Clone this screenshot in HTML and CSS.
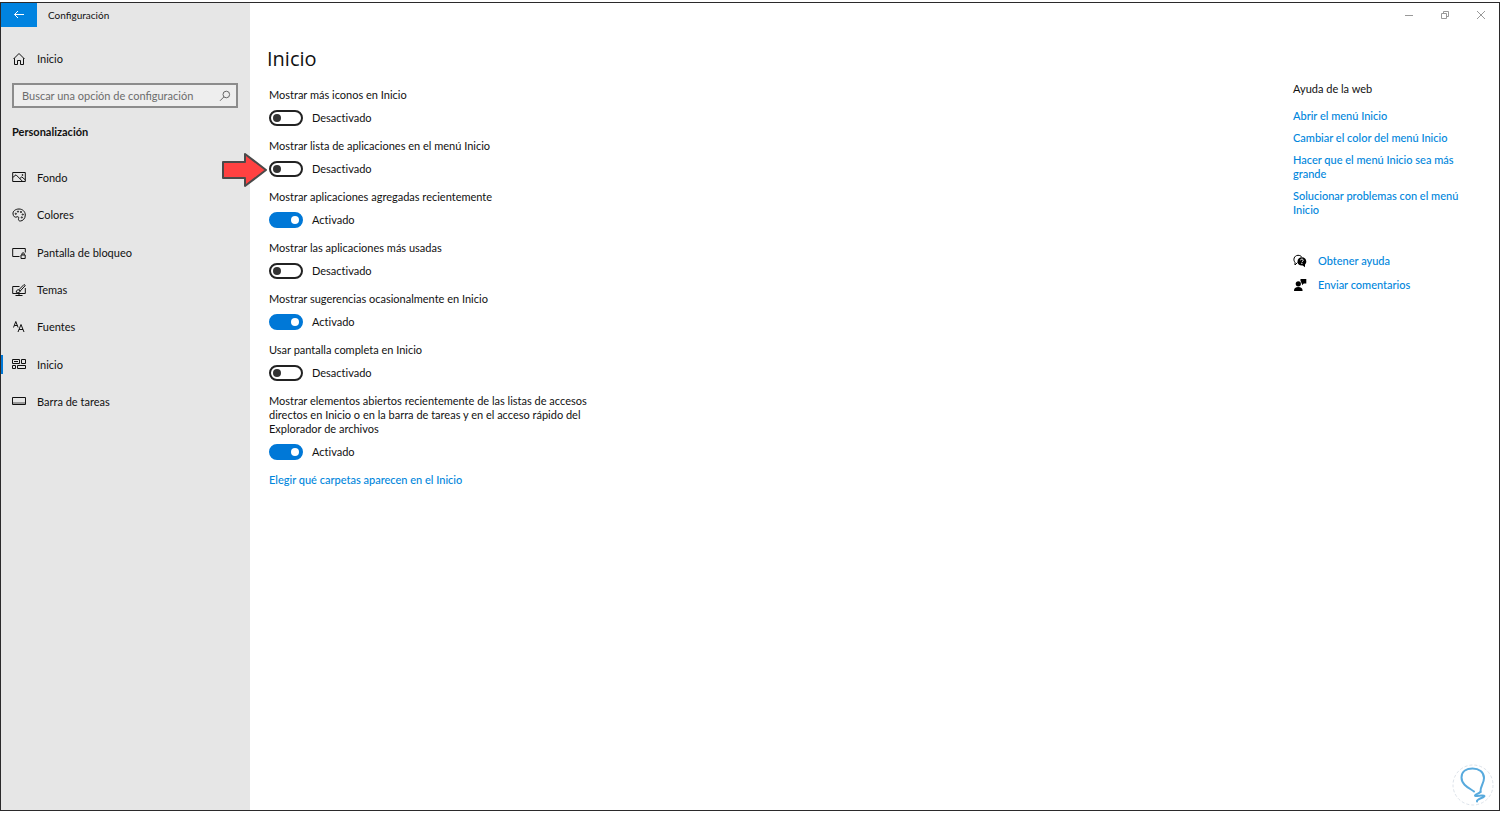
FILE: index.html
```html
<!DOCTYPE html>
<html lang="es">
<head>
<meta charset="utf-8">
<title>Configuración</title>
<link rel="stylesheet" href="styles.css">
</head>
<body>
<div class="window">
  <aside class="sidebar">
    <header class="titlebar">
      <button class="back" type="button" aria-label="Atrás">
        <svg class="back-icon" viewBox="0 0 12 12"><path d="M11 5.500H1.500M5 2L1.500 5.500 5 9"/></svg>
      </button>
      <span class="app-name">Configuración</span>
    </header>
    <a class="nav-link home" href="#">
      <svg class="icon" viewBox="0 0 14 14"><path d="M1.500 7L7 1.500 12.500 7M2.500 6.200V12.500H5.500V8.500h3v4h3V6.200"/></svg>
      <span>Inicio</span>
    </a>
    <form class="search" role="search">
      <input class="search-input" type="search" placeholder="Buscar una opción de configuración" aria-label="Buscar una opción de configuración">
      <svg class="search-icon" viewBox="0 0 12 12"><circle cx="7.300" cy="4.500" r="3.300"/><path d="M4.900 6.900L1 10.800"/></svg>
    </form>
    <h2 class="section-name">Personalización</h2>
    <nav class="nav">
      <a class="nav-link" href="#">
        <svg class="icon" viewBox="0 0 14 14"><path d="M.7 1.500h12.600v9H.7zM.7 6.500L4 3.800l6.500 6.500M7.800 7.500l2-1.600 3.500 3"/><circle cx="10.500" cy="4" r=".5"/></svg>
        <span>Fondo</span>
      </a>
      <a class="nav-link" href="#">
        <svg class="icon" viewBox="0 0 14 14"><path d="M1 6C.6 3 3.600 1 7 1c3.500 0 6.300 2.500 6.300 6 0 3.700-2.600 6-5 6-1.800 0-2.100-1.200-1.700-2.500.4-1.400-.4-2.200-1.600-1.600C3 9.800 1.300 8.500 1 6z"/><circle cx="3.800" cy="5.800" r=".6"/><circle cx="6" cy="3.600" r=".6"/><circle cx="9" cy="4" r=".6"/><circle cx="10.800" cy="6.500" r=".6"/><circle cx="9.800" cy="9.400" r=".6"/></svg>
        <span>Colores</span>
      </a>
      <a class="nav-link" href="#">
        <svg class="icon" viewBox="0 0 14 14"><path d="M7.500 10.500H.7v-8h12.600v4M9 9h4.200v3.500H9zM10 9V7.800c0-1.500 2.200-1.500 2.200 0V9"/></svg>
        <span>Pantalla de bloqueo</span>
      </a>
      <a class="nav-link" href="#">
        <svg class="icon" viewBox="0 0 14 14"><path d="M7.500 3.500H.7v7h12.600V5M3.500 12.500h7M7 10.500v2M4.200 9.200c.2-2 1.300-2.700 2.600-2.300L12 1.500l1.300 1L8.200 8c0 1.500-2.200 2.200-4 1.200zM6.800 6.900L8.200 8"/></svg>
        <span>Temas</span>
      </a>
      <a class="nav-link" href="#">
        <svg class="icon" viewBox="0 0 14 14"><path d="M1.500 7.500l2.300-6 2.300 6M2.300 5.500h3M6 12l3-7.500 3 7.500M7 9.500h4"/></svg>
        <span>Fuentes</span>
      </a>
      <a class="nav-link current" href="#" aria-current="page">
        <svg class="icon" viewBox="0 0 14 14"><path d="M.5 1.500h7v4h-7zM9.500 1.500h4v4h-4zM.5 7.500h3v3h-3zM5.500 7.500h8v3h-8zM2 3.500h4"/></svg>
        <span>Inicio</span>
      </a>
      <a class="nav-link" href="#">
        <svg class="icon" viewBox="0 0 14 14"><path class="shade" d="M1 7h12v3H1z"/><path d="M.5 2.500h13v7H.5z"/></svg>
        <span>Barra de tareas</span>
      </a>
    </nav>
  </aside>

  <div class="page">
    <div class="controls">
      <button class="control" type="button" aria-label="Minimizar"><svg class="control-icon" viewBox="0 0 10 10"><path d="M1 5.500h8"/></svg></button>
      <button class="control" type="button" aria-label="Restaurar"><svg class="control-icon" viewBox="0 0 10 10"><path d="M1.500 3.500h5v5h-5zM3.500 3.500v-2h5v5h-2"/></svg></button>
      <button class="control" type="button" aria-label="Cerrar"><svg class="control-icon" viewBox="0 0 10 10"><path d="M1 1l8 8M9 1L1 9"/></svg></button>
    </div>
    <div class="content">
      <main class="main">
        <h1 class="heading">Inicio</h1>
        <div class="settings">
          <div class="setting">
            <label class="setting-name" for="s1">Mostrar más iconos en Inicio</label>
            <div class="setting-row"><input class="toggle" type="checkbox" role="switch" id="s1"><span>Desactivado</span></div>
          </div>
          <div class="setting">
            <label class="setting-name" for="s2">Mostrar lista de aplicaciones en el menú Inicio</label>
            <div class="setting-row"><input class="toggle" type="checkbox" role="switch" id="s2"><span>Desactivado</span>
              <svg class="pointer" viewBox="0 0 48 36"><path d="M2 10h22V2l21 16-21 16v-8H2z"/></svg>
            </div>
          </div>
          <div class="setting">
            <label class="setting-name" for="s3">Mostrar aplicaciones agregadas recientemente</label>
            <div class="setting-row"><input class="toggle" type="checkbox" role="switch" id="s3" checked><span>Activado</span></div>
          </div>
          <div class="setting">
            <label class="setting-name" for="s4">Mostrar las aplicaciones más usadas</label>
            <div class="setting-row"><input class="toggle" type="checkbox" role="switch" id="s4"><span>Desactivado</span></div>
          </div>
          <div class="setting">
            <label class="setting-name" for="s5">Mostrar sugerencias ocasionalmente en Inicio</label>
            <div class="setting-row"><input class="toggle" type="checkbox" role="switch" id="s5" checked><span>Activado</span></div>
          </div>
          <div class="setting">
            <label class="setting-name" for="s6">Usar pantalla completa en Inicio</label>
            <div class="setting-row"><input class="toggle" type="checkbox" role="switch" id="s6"><span>Desactivado</span></div>
          </div>
          <div class="setting">
            <label class="setting-name" for="s7">Mostrar elementos abiertos recientemente de las listas de accesos directos en Inicio o en la barra de tareas y en el acceso rápido del Explorador de archivos</label>
            <div class="setting-row"><input class="toggle" type="checkbox" role="switch" id="s7" checked><span>Activado</span></div>
          </div>
          <a class="link" href="#">Elegir qué carpetas aparecen en el Inicio</a>
        </div>
      </main>
      <aside class="help">
        <h2 class="help-title">Ayuda de la web</h2>
        <div class="help-links">
          <a class="link" href="#">Abrir el menú Inicio</a>
          <a class="link" href="#">Cambiar el color del menú Inicio</a>
          <a class="link" href="#">Hacer que el menú Inicio sea más grande</a>
          <a class="link" href="#">Solucionar problemas con el menú Inicio</a>
        </div>
        <div class="support">
          <a class="link support-link" href="#">
            <svg class="support-icon" viewBox="0 0 14 14"><path class="line" d="M4.500 8.500L2 11V8.300C-.2 6 1 1.500 5 1.300c1.800 0 3 .6 3.700 1.700"/><path d="M8.800 3.200c2.700 0 4.500 1.900 4.500 4.200 0 1.300-.6 2.300-1.300 3v2.900l-2.300-1.800C6.500 11.800 4.500 10 4.500 7.400c0-2.400 1.900-4.200 4.300-4.200z"/><path class="mark" d="M7.500 6.300c0-1.700 2.800-1.600 2.700 0 0 1-1.300 1-1.300 2M8.900 9v1"/></svg>
            <span>Obtener ayuda</span>
          </a>
          <a class="link support-link" href="#">
            <svg class="support-icon" viewBox="0 0 14 14"><circle cx="5.300" cy="5.800" r="2.600"/><path d="M1 13c0-3 1.500-4 4.300-4s4.300 1 4.300 4zM7.500 1h5.800v4.500h-2.500L9 7.300V5.500h-.5C8.300 4.200 8 3.500 7.500 3z"/></svg>
            <span>Enviar comentarios</span>
          </a>
        </div>
      </aside>
    </div>
  </div>
  <svg class="watermark" viewBox="0 0 42 42"><circle class="ring" cx="21" cy="21" r="20"/><path class="bulb" d="M22 27.500c-3.500-3-12.500-6-12.500-14C9.500 7 15 4.500 20.500 4.500 27 4.500 32 8 32 14c0 6-4 8-3.500 14"/><path class="bulb" d="M28.500 28c-2 2-5 2-5.500 3.500s9-1 9.500.5-8.500 3-7.500 5.500"/></svg>
</div>
</body>
</html>
```
FILE: styles.css
```css
* { box-sizing: border-box; }

body {
  margin: 0;
  padding: 2px 0;
  min-height: 100vh;
  display: flex;
  background: #fff;
  color: #111;
  font: 11px/14px Lato, "Open Sans", sans-serif;
}

h1, h2 { margin: 0; }

button { border: 0; padding: 0; background: none; }

a { color: inherit; text-decoration: none; }

svg {
  flex: none;
  fill: none;
  stroke: currentColor;
}

.window {
  position: relative;
  flex: 1;
  display: flex;
  border: 1px solid #2b2a2b;
}

.sidebar {
  flex: none;
  width: 249px;
  background: #e6e6e6;
}

.titlebar {
  display: flex;
  align-items: center;
  gap: 11px;
  height: 24px;
}

.back {
  display: grid;
  place-items: center;
  width: 36px;
  height: 24px;
  background: #0083e0;
  color: #fff;
}

.back-icon { width: 12px; height: 12px; }

.app-name { font-size: 10px; }

.nav-link {
  display: flex;
  align-items: center;
  gap: 11px;
  padding-left: 11px;
}

.home { margin-top: 25px; }

.icon { width: 14px; height: 14px; }

.shade { fill: #999; stroke: none; }

.search {
  display: flex;
  align-items: center;
  height: 25px;
  margin: 17px 12px 0 11px;
  padding: 0 5px 0 8px;
  border: 2px solid #8c8c8c;
  background: #eee;
}

.search-input {
  flex: 1;
  min-width: 0;
  padding: 0;
  border: 0;
  outline: 0;
  background: none;
  font: inherit;
}

.search-input::placeholder { color: #6c6c6c; }

.search-icon { width: 12px; height: 12px; color: #666; }

.section-name {
  margin: 17px 0 0 11px;
  font-size: 11px;
  font-weight: 700;
}

.nav {
  display: flex;
  flex-direction: column;
  height: 262px;
  margin-top: 20px;
}

.nav .nav-link { flex: 1; }

.current {
  background: linear-gradient(#0078d7, #0078d7) left center / 2px 19px no-repeat;
}

.page { flex: 1; }

.controls {
  display: flex;
  justify-content: flex-end;
  height: 24px;
}

.control {
  display: grid;
  place-items: center;
  width: 36px;
  color: #999;
}

.control-icon { width: 10px; height: 10px; }

.content {
  display: flex;
  justify-content: space-between;
}

.main { padding: 18px 0 0 17px; }

.heading {
  font: 400 20px/28px "Open Sans", sans-serif;
}

.settings {
  display: flex;
  flex-direction: column;
  align-items: flex-start;
  gap: 13px;
  max-width: 330px;
  padding: 15px 0 0 2px;
}

.setting { display: grid; gap: 8px; }

.setting-row {
  position: relative;
  display: flex;
  align-items: center;
  gap: 9px;
  height: 16px;
  font-variant-ligatures: none;
}

.toggle {
  appearance: none;
  display: flex;
  align-items: center;
  width: 34px;
  height: 16px;
  margin: 0;
  padding: 0 2px;
  border: 2px solid #222;
  border-radius: 8px;
}

.toggle::before {
  content: "";
  width: 8px;
  height: 8px;
  border-radius: 50%;
  background: #333;
}

.toggle:checked {
  justify-content: flex-end;
  border-color: #0078d7;
  background: #0078d7;
}

.toggle:checked::before { background: #fff; }

.pointer {
  position: absolute;
  left: -48px;
  top: -9px;
  width: 48px;
  height: 36px;
  fill: #ff4141;
  stroke: #4a4a4a;
  stroke-width: 2;
  stroke-linejoin: round;
}

.link { color: #0086dc; font-weight: 500; }

.help {
  width: 206px;
  padding: 55px 31px 0 0;
}

.help-title { font-size: 11px; font-weight: 400; }

.help-links {
  display: grid;
  gap: 8px;
  margin-top: 13px;
}

.support {
  display: grid;
  gap: 10px;
  margin-top: 37px;
}

.support-link {
  display: flex;
  align-items: center;
  gap: 11px;
}

.support-icon {
  width: 14px;
  height: 14px;
  fill: #000;
  stroke: none;
}

.support-icon .line { fill: none; stroke: #000; }

.support-icon .mark { fill: none; stroke: #fff; }

.watermark {
  position: absolute;
  right: 5px;
  bottom: 4px;
  width: 42px;
  height: 42px;
}

.ring { stroke: #dde3ea; stroke-dasharray: 3 2; }

.bulb { stroke: #58aadd; stroke-width: 2; stroke-linecap: round; stroke-linejoin: round; }
```
